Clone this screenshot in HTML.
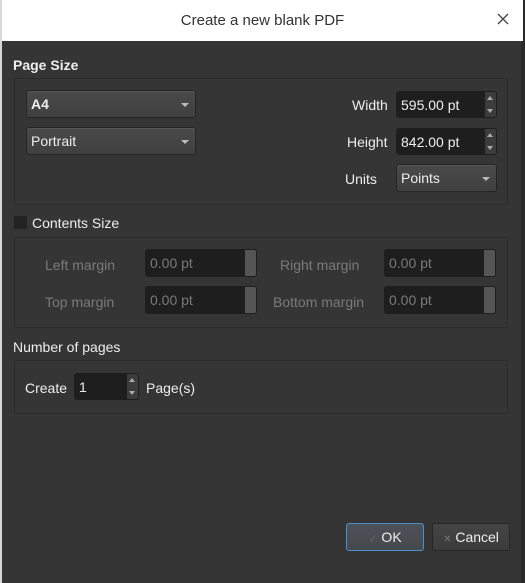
<!DOCTYPE html>
<html><head><style>
body{margin:0;width:525px;height:583px;overflow:hidden;background:#2a2a2a;font-family:"Liberation Sans",sans-serif;position:relative}
.win{position:absolute;left:0;top:0;width:521px;height:583px;background:#353535;border-left:2px solid #d8d8d8;box-sizing:border-box}
.title{position:absolute;left:0;top:0;width:521px;height:41px;background:#fff;color:#333;font-size:15px;text-align:center;line-height:42px}
.x{position:absolute;left:494px;top:12px;width:14px;height:14px}
.a{position:absolute;color:#eee;font-size:14px;line-height:16px;white-space:nowrap}
.dis{color:#7a7a7a}
.grp{position:absolute;left:14px;width:494px;border:1px solid #2c2c2c;border-radius:2px;box-sizing:border-box}
.combo{position:absolute;background:linear-gradient(#4a4a4a,#404040);border:1px solid #252525;border-radius:3px;box-sizing:border-box;color:#eee;font-size:14px;padding-left:4px;box-shadow:inset 0 1px 0 #555}
.combo:after{content:"";position:absolute;right:6px;top:12px;border:4px solid transparent;border-top:4px solid #bbb}
.spin{position:absolute;background:#1e1e1e;border-radius:3px;box-sizing:border-box;color:#eee;font-size:14px;padding-left:5px}
.spin .b{position:absolute;right:1px;top:1px;bottom:1px;width:11px;background:#3c3c3c;border-radius:0 2px 2px 0}
.spin .b:before{content:"";position:absolute;left:2px;top:4px;border:3.5px solid transparent;border-bottom:4px solid #aaa;border-top:0}
.spin .b:after{content:"";position:absolute;left:2px;bottom:4px;border:3.5px solid transparent;border-top:4px solid #aaa;border-bottom:0}
.spin.d{color:#7a7a7a}.spin.d .b{background:#555}.spin.d .b:before,.spin.d .b:after{display:none}
.btn{position:absolute;top:523px;width:78px;height:28px;box-sizing:border-box;border-radius:3px;color:#eee;font-size:14px;text-align:center;line-height:26px}
</style></head><body>
<div class="win">
<div class="title">Create a new blank PDF</div>
<svg class="x" viewBox="0 0 14 14"><path d="M2 2L12 12M12 2L2 12" stroke="#444" stroke-width="1.3"/></svg>
</div>
<div class="a" style="left:13px;top:57px;font-weight:bold;font-size:14px">Page Size</div>
<div class="grp" style="top:78px;height:127px"></div>
<div class="combo" style="left:26px;top:90px;width:170px;height:28px;line-height:26px;font-weight:bold">A4</div>
<div class="combo" style="left:26px;top:127px;width:170px;height:28px;line-height:26px">Portrait</div>
<div class="a" style="left:352px;top:97px">Width</div>
<div class="spin" style="left:396px;top:91px;width:101px;height:27px;line-height:28px">595.00 pt<div class="b"></div></div>
<div class="a" style="left:347px;top:134px">Height</div>
<div class="spin" style="left:396px;top:128px;width:101px;height:27px;line-height:28px">842.00 pt<div class="b"></div></div>
<div class="a" style="left:345px;top:171px">Units</div>
<div class="combo" style="left:396px;top:164px;width:101px;height:28px;line-height:27px">Points</div>
<div style="position:absolute;left:14px;top:216px;width:13px;height:13px;background:#222"></div>
<div class="a" style="left:32px;top:215px">Contents Size</div>
<div class="grp" style="top:237px;height:91px"></div>
<div class="a dis" style="left:45px;top:257px">Left margin</div>
<div class="spin d" style="left:145px;top:249px;width:112px;height:28px;line-height:29px">0.00 pt<div class="b"></div></div>
<div class="a dis" style="left:280px;top:257px">Right margin</div>
<div class="spin d" style="left:384px;top:249px;width:112px;height:28px;line-height:29px">0.00 pt<div class="b"></div></div>
<div class="a dis" style="left:45px;top:294px">Top margin</div>
<div class="spin d" style="left:145px;top:286px;width:112px;height:28px;line-height:29px">0.00 pt<div class="b"></div></div>
<div class="a dis" style="left:273px;top:294px">Bottom margin</div>
<div class="spin d" style="left:384px;top:286px;width:112px;height:28px;line-height:29px">0.00 pt<div class="b"></div></div>
<div class="a" style="left:13px;top:339px">Number of pages</div>
<div class="grp" style="top:360px;height:54px"></div>
<div class="a" style="left:25px;top:380px">Create</div>
<div class="spin" style="left:74px;top:373px;width:65px;height:27px;line-height:28px">1<div class="b"></div></div>
<div class="a" style="left:146px;top:380px">Page(s)</div>
<div class="btn" style="left:346px;border:1px solid #4a90d0;background:linear-gradient(#4e5258,#45484d)"><span style="color:#666;font-size:11px">✓</span> OK</div>
<div class="btn" style="left:432px;border:1px solid #262626;background:linear-gradient(#444,#3c3c3c)"><span style="color:#777;font-size:10px">✕</span> Cancel</div>
</body></html>
